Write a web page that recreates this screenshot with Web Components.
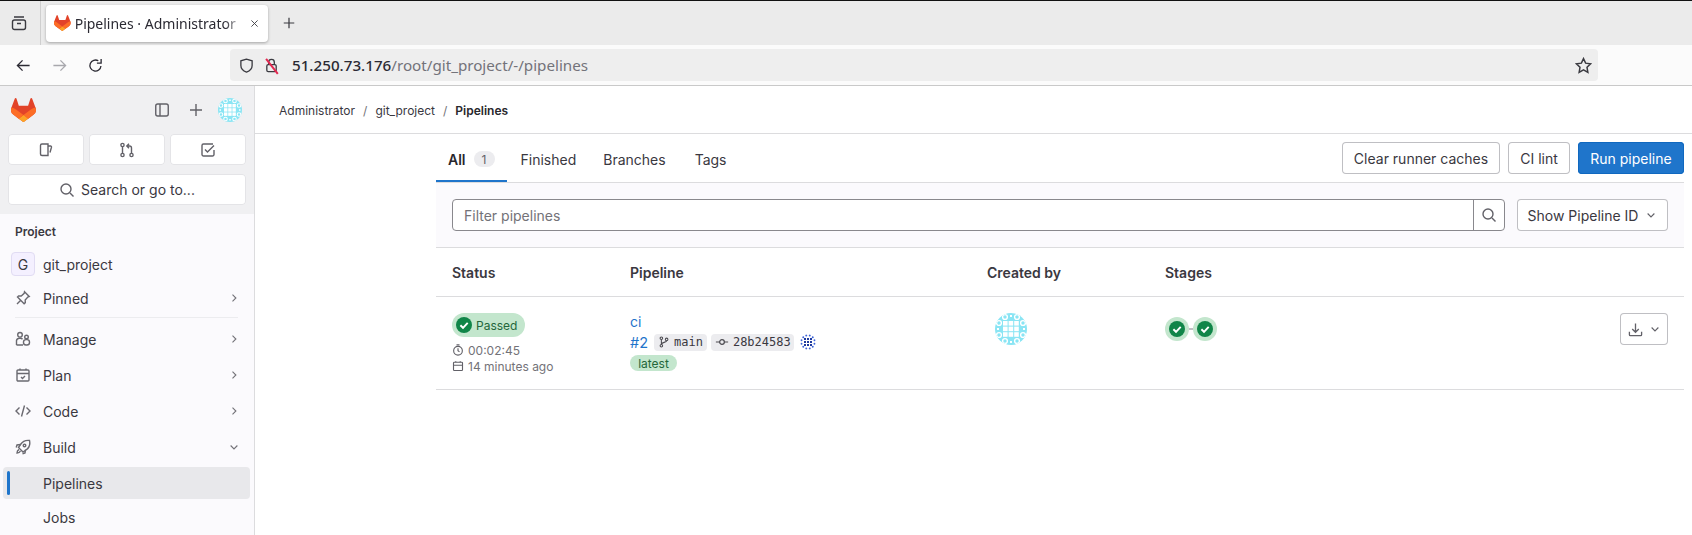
<!DOCTYPE html>
<html lang="en">
<head>
<meta charset="utf-8">
<title>Pipelines · Administrator</title>
<style>
    html, body { margin: 0; height: 100%; overflow: hidden; background: #fff; }
    body { font-family: Inter, "Noto Sans", sans-serif; font-size: 14px; color: #3a383f; }
    #shell { display: flex; flex-direction: column; height: 535px; }
    #page { display: flex; flex: 1; min-height: 0; }
</style>
</head>
<body>
<div id="shell">
    <browser-bar></browser-bar>
    <div id="page">
        <side-nav></side-nav>
        <pipelines-page></pipelines-page>
    </div>
</div>

<script>
// Small stroke icons, all on a 16 box
const icons = {
    chevronRight: '<path d="M6 3.5 10.5 8 6 12.5"/>',
    chevronDown: '<path d="M3.5 6 8 10.5 12.5 6"/>',
    panel: '<rect x="1.75" y="2" width="12.5" height="12" rx="2"/><path d="M6 2v12"/>',
    plus: '<path d="M8 2v12M2 8h12"/>',
    issue: '<path d="M10 13.5H4a1.5 1.5 0 0 1-1.5-1.5V3.5A1.5 1.5 0 0 1 4 2h6v11.5Zm0-9.5h2.5a1 1 0 0 1 1 1.2L12 10.5"/>',
    mr: '<circle cx="3.5" cy="3" r="1.6"/><circle cx="3.5" cy="13" r="1.6"/><circle cx="12.5" cy="13" r="1.6"/><path d="M3.5 4.6v6.8M12.5 11.4V6a2 2 0 0 0-2-2H8m2-2.2L7.8 4 10 6.2"/>',
    todo: '<path d="M14 8v4.5a1.5 1.5 0 0 1-1.5 1.5h-9A1.5 1.5 0 0 1 2 12.5v-9A1.5 1.5 0 0 1 3.5 2H13"/><path d="m5 7.5 2.5 2.5L14 3.5"/>',
    search: '<circle cx="7" cy="7" r="5"/><path d="m11 11 3.5 3.5"/>',
    pin: '<path d="m9.5 1.8 4.7 4.7-1.4.5-2.6 3 .1 2.6-1.2 1.1-6.6-6.6 1.1-1.2 2.6.1 3-2.6.3-1.6ZM5.5 10.5 2 14"/>',
    users: '<circle cx="5" cy="3.8" r="2.3"/><path d="M1.5 14V9.5A3 3 0 0 1 4.5 7.2h1a3 3 0 0 1 2 1M1.5 14h6.5"/><circle cx="11.5" cy="6" r="1.8"/><rect x="8.5" y="8.6" width="6" height="5.4" rx="2.5"/>',
    calendar: '<rect x="2" y="3" width="12" height="11" rx="1"/><path d="M2 6.5h12M5 1.5V3M11 1.5V3M6 10l1.5 1.5L10 9"/>',
    code: '<path d="M4.5 4.5 1 8l3.5 3.5M11.5 4.5 15 8l-3.5 3.5M9.5 2.5l-3 11"/>',
    rocket: '<path d="M14.5 1.5c-4-.5-7 1-9 4l-2 3 4.500 4.500 3-2c3-2 4.500-5 3.500-9.500Z"/><circle cx="9.500" cy="6.500" r="1.300"/><path d="M5.500 5.500 2 6l-.800 2.500M10.500 10.500 10 14l-2.500.800M4 10.500c-1 .500-2 2-2 3.500 1.500 0 3-1 3.500-2"/>',
    clock: '<circle cx="8" cy="9" r="5.800"/><path d="M8 5.800V9l2 1.500M6 1.200h4"/>',
    date: '<rect x="2" y="3" width="12" height="11" rx="1"/><path d="M2 7h12M5 1.500V3M11 1.500V3"/>',
    branch: '<circle cx="4.500" cy="3" r="1.700"/><circle cx="4.500" cy="13" r="1.700"/><circle cx="11.500" cy="4.500" r="1.700"/><path d="M4.500 4.700v6.600M11.500 6.200c0 2.800-7 1.800-7 5"/>',
    commit: '<circle cx="8" cy="8" r="2.700"/><path d="M1 8h4.300M10.700 8H15"/>',
    download: '<path d="M8 1.500v9M4.500 7.500 8 11l3.500-3.500M1.500 10.500v3a1 1 0 0 0 1 1h11a1 1 0 0 0 1-1v-3"/>',
    back: '<path d="M14.500 8h-13M7 2.500 1.500 8 7 13.500"/>',
    reload: '<path d="M13.800 8.500A5.900 5.900 0 1 1 11 3"/><path d="M14 1v4.500H9.500"/>',
    shield: '<path d="M8 1.200 2 3v5c0 3.500 2.500 5.800 6 7 3.500-1.200 6-3.500 6-7V3L8 1.200Z"/>',
    lock: '<rect x="3" y="7" width="10" height="7.500" rx="1.500"/><path d="M5 7V4.500a3 3 0 0 1 6 0V7"/>',
    star: '<path d="m8 1.500 2 4.300 4.700.600-3.400 3.300.8 4.700L8 12.100l-4.100 2.300.8-4.700L1.300 6.400 6 5.800 8 1.500Z"/>',
    tabs: '<rect x="1.500" y="5" width="13" height="9.500" rx="2"/><path d="M3 2h10M6 8.500h4"/>',
    close: '<path d="m3.500 3.500 9 9m0-9-9 9"/>'
};

const icon = (name, size = 16, color = 'currentColor', width = 1.4) =>
    `<svg width="${size}" height="${size}" viewBox="0 0 16 16" fill="none" stroke="${color}" stroke-width="${width}" style="display:block;flex:none">${icons[name]}</svg>`;

const tanuki = (size) => `<svg width="${size * 25 / 24}" height="${size}" viewBox="0 0 25 24" style="display:block;flex:none">
    <path d="m24.507 9.5-.034-.09L21.082.562a.896.896 0 0 0-1.694.091l-2.29 7.01H7.825L5.535.653a.898.898 0 0 0-1.694-.09L.451 9.411.416 9.5a6.297 6.297 0 0 0 2.09 7.278l.012.01.03.022 5.16 3.867 2.56 1.935 1.554 1.176a1.051 1.051 0 0 0 1.268 0l1.555-1.176 2.56-1.935 5.197-3.89.014-.01A6.297 6.297 0 0 0 24.507 9.5Z" fill="#E24329"/>
    <path d="m24.507 9.5-.034-.09a11.44 11.44 0 0 0-4.56 2.051l-7.447 5.632 4.742 3.584 5.197-3.89.014-.01A6.297 6.297 0 0 0 24.507 9.5Z" fill="#FC6D26"/>
    <path d="m7.707 20.677 2.56 1.935 1.555 1.176a1.051 1.051 0 0 0 1.268 0l1.555-1.176 2.56-1.935-4.743-3.584-4.755 3.584Z" fill="#FCA326"/>
    <path d="M5.01 11.461a11.43 11.43 0 0 0-4.56-2.05L.416 9.5a6.297 6.297 0 0 0 2.09 7.278l.012.01.03.022 5.16 3.867 4.745-3.584-7.444-5.632Z" fill="#FC6D26"/>
</svg>`;

const checkCircle = (size, bg = '#108548') => `<svg width="${size}" height="${size}" viewBox="0 0 16 16" style="display:block;flex:none">
    <circle cx="8" cy="8" r="8" fill="${bg}"/>
    <path d="M4.400 8.300 7 10.800l4.700-5" fill="none" stroke="#fff" stroke-width="1.900"/>
</svg>`;

// identicon: rings round the rim and a square lattice in the middle
const latticeCells = () => {
    let out = '';
    [[10, 4], [22, 4], [4, 10], [4, 22], [28, 10], [28, 22], [10, 28], [22, 28]].forEach(([x, y]) => {
        out += `<circle cx="${x}" cy="${y}" r="2.400" fill="none" stroke="#fff" stroke-width="1.400"/>`;
    });
    [[16, 3], [16, 29], [3, 16], [29, 16]].forEach(([x, y]) => {
        out += `<rect x="${x - 1}" y="${y - 1}" width="2" height="2" fill="#fff"/>`;
    });
    for (let y = 0; y < 3; y++) {
        for (let x = 0; x < 3; x++) {
            out += `<rect x="${8 + x * 5.600}" y="${8 + y * 5.600}" width="4.600" height="4.600" fill="#fff"/>`;
        }
    }
    return out;
};

// the tiny navy one: three by three squares in a ring of dots
const dotCells = () => {
    let out = '';
    for (let y = 0; y < 3; y++) {
        for (let x = 0; x < 3; x++) {
            out += `<rect x="${8 + x * 6}" y="${8 + y * 6}" width="4" height="4" fill="#1f3a9e"/>`;
        }
    }
    for (let i = 0; i < 12; i++) {
        const a = (i + 0.500) * Math.PI / 6;
        out += `<circle cx="${16 + 13.500 * Math.cos(a)}" cy="${16 + 13.500 * Math.sin(a)}" r="2" fill="#3d63d8"/>`;
    }
    return out;
};

class IdAvatar extends HTMLElement {
    connectedCallback() {
        const size = Number(this.getAttribute('size') || 24);
        const dots = this.hasAttribute('dots');
        this.attachShadow({ mode: 'open' }).innerHTML = `
            <style>
                :host { display: block; width: ${size}px; height: ${size}px; flex: none; }
                svg { display: block; }
            </style>
            <svg width="${size}" height="${size}" viewBox="0 0 32 32">
                <clipPath id="c"><circle cx="16" cy="16" r="16"/></clipPath>
                <g clip-path="url(#c)"><rect width="32" height="32" fill="${dots ? '#fff' : '#8ae5f4'}"/>${dots ? dotCells() : latticeCells()}</g>
            </svg>`;
    }
}
customElements.define('id-avatar', IdAvatar);

class BrowserBar extends HTMLElement {
    connectedCallback() {
        this.attachShadow({ mode: 'open' }).innerHTML = `
            <style>
                :host { display: block; border-top: 1px solid #111; font-family: "Noto Sans", sans-serif; color: #2b2a33; flex: none; }
                .strip { height: 44px; background: #ebebeb; display: flex; align-items: center; }
                .tabs-btn { width: 41px; display: flex; justify-content: center; border-right: 1px solid #cfcfcf; height: 100%; align-items: center; box-sizing: border-box; padding-right: 3px; }
                .tab { margin-left: 5px; width: 222px; height: 37px; background: #fff; border-radius: 4px; box-shadow: 0 1px 3px rgba(0,0,0,.3); display: flex; align-items: center; padding: 0 8px 0 8px; box-sizing: border-box; gap: 4px; font-size: 14px; }
                .title { flex: 1; overflow: hidden; white-space: nowrap; -webkit-mask-image: linear-gradient(to right, #000 88%, transparent); mask-image: linear-gradient(to right, #000 88%, transparent); }
                .new { margin-left: 14px; }
                .nav { height: 40px; background: #fbfbfb; display: flex; align-items: center; padding-left: 16px; border-bottom: 1px solid #c9c9c9; }
                .nav .btn { width: 15px; margin-right: 21px; }
                .url { margin-left: 106px; width: 1368px; height: 32px; background: #eeeeee; border-radius: 4px; display: flex; align-items: center; padding: 0 6px 0 9px; box-sizing: border-box; font-size: 15.200px; }
                .url .addr { margin-left: 13px; flex: 1; color: #73737a; }
                .url b { font-weight: 500; color: #2b2a33; }
                .lock { position: relative; margin-left: 10px; }
                .lock::after { content: ''; position: absolute; left: 7px; top: -1px; width: 1.500px; height: 19px; background: #e22850; transform: rotate(-38deg); }
            </style>
            <div class="strip">
                <div class="tabs-btn">${icon('tabs', 16, '#3a3a40')}</div>
                <div class="tab">
                    ${tanuki(16)}
                    <span class="title">Pipelines · Administrator</span>
                    ${icon('close', 11, '#3a3a40', 1.300)}
                </div>
                <div class="new">${icon('plus', 14, '#3a3a40', 1.400)}</div>
            </div>
            <div class="nav">
                <div class="btn">${icon('back', 15, '#2b2a33')}</div>
                <div class="btn">${icon('back', 15, '#a8a8ad').replace('style="', 'style="transform:scaleX(-1);')}</div>
                <div class="btn">${icon('reload', 15, '#2b2a33')}</div>
                <div class="url">
                    ${icon('shield', 15, '#3a3a40')}
                    <span class="lock">${icon('lock', 15, '#3a3a40')}</span>
                    <span class="addr"><b>51.250.73.176</b>/root/git_project/-/pipelines</span>
                    ${icon('star', 17, '#3a3a40')}
                </div>
            </div>`;
    }
}
customElements.define('browser-bar', BrowserBar);

class NavItem extends HTMLElement {
    connectedCallback() {
        const glyph = this.getAttribute('icon');
        const arrow = this.getAttribute('arrow');
        const active = this.hasAttribute('active');
        this.attachShadow({ mode: 'open' }).innerHTML = `
            <style>
                :host { display: block; }
                .row { display: flex; align-items: center; height: 32px; margin: 0 4px 0 3px; padding: 0 10px 0 12px; border-radius: 4px; position: relative; color: #3a383f; font-size: 14px; }
                .row.active { background: #e8e8eb; }
                .row.active::before { content: ''; position: absolute; left: 4px; top: 4px; bottom: 4px; width: 3px; border-radius: 2px; background: #1f75cb; }
                .glyph { width: 16px; margin-right: 12px; color: #6a6970; }
                .label { flex: 1; }
                .arrow { color: #737278; }
            </style>
            <div class="row ${active ? 'active' : ''}">
                <span class="glyph">${glyph ? icon(glyph, 16) : ''}</span>
                <span class="label"><slot></slot></span>
                ${arrow ? `<span class="arrow">${icon(arrow === 'down' ? 'chevronDown' : 'chevronRight', 12, 'currentColor', 1.500)}</span>` : ''}
            </div>`;
    }
}
customElements.define('nav-item', NavItem);

class SideNav extends HTMLElement {
    connectedCallback() {
        this.attachShadow({ mode: 'open' }).innerHTML = `
            <style>
                :host { display: block; width: 255px; flex: none; box-sizing: border-box; border-right: 1px solid #dcdcde; background: #fbfafd; overflow: hidden; }
                .top { background: #f0f0f2; height: 128px; padding: 12px 8px 0; box-sizing: border-box; }
                .brand { display: flex; align-items: center; height: 24px; padding-left: 3px; color: #626168; }
                .brand .logo { flex: 1; }
                .brand .panel { margin-right: 18px; }
                .brand .plus { margin-right: 14px; }
                .brand id-avatar { margin-right: 4px; }
                .quick { display: grid; grid-template-columns: 76px 76px 76px; justify-content: space-between; margin-top: 12px; }
                .card { height: 31px; background: #fff; border-radius: 4px; box-shadow: 0 0 0 1px #e4e4e7 inset; display: flex; align-items: center; justify-content: center; color: #626168; }
                .search { margin-top: 9px; height: 31px; gap: 6px; font-size: 14px; color: #3a383f; }
                .search svg { color: #626168; }
                h2 { margin: 0; font-size: 12px; font-weight: 600; color: #3a383f; padding: 0 15px; height: 16px; line-height: 16px; margin-top: 10px; }
                .project { display: flex; align-items: center; height: 32px; padding-left: 11px; margin-top: 8px; font-size: 14px; }
                .tile { width: 24px; height: 24px; box-sizing: border-box; border: 1px solid #e1dcf3; border-radius: 4px; background: #f4f0ff; display: flex; align-items: center; justify-content: center; margin-right: 8px; font-size: 14px; }
                hr { border: 0; border-top: 1px solid #ececef; margin: 3px 16px 5px 15px; }
            </style>
            <div class="top">
                <div class="brand">
                    <span class="logo">${tanuki(24)}</span>
                    <span class="panel">${icon('panel', 16)}</span>
                    <span class="plus">${icon('plus', 16)}</span>
                    <id-avatar size="24"></id-avatar>
                </div>
                <div class="quick">
                    <div class="card">${icon('issue', 16)}</div>
                    <div class="card">${icon('mr', 16)}</div>
                    <div class="card">${icon('todo', 16)}</div>
                </div>
                <div class="card search">${icon('search', 16)}<span>Search or go to...</span></div>
            </div>
            <h2>Project</h2>
            <div class="project"><span class="tile">G</span>git_project</div>
            <nav-item icon="pin" arrow="right" style="margin-top:2px">Pinned</nav-item>
            <hr>
            <nav-item icon="users" arrow="right" style="margin-top:2px">Manage</nav-item>
            <nav-item icon="calendar" arrow="right" style="margin-top:4px">Plan</nav-item>
            <nav-item icon="code" arrow="right" style="margin-top:4px">Code</nav-item>
            <nav-item icon="rocket" arrow="down" style="margin-top:4px">Build</nav-item>
            <nav-item active style="margin-top:4px">Pipelines</nav-item>
            <nav-item style="margin-top:2px">Jobs</nav-item>`;
    }
}
customElements.define('side-nav', SideNav);

class GlButton extends HTMLElement {
    connectedCallback() {
        const primary = this.hasAttribute('primary');
        this.attachShadow({ mode: 'open' }).innerHTML = `
            <style>
                :host { display: inline-flex; flex: none; height: 32px; box-sizing: border-box; align-items: center; justify-content: center; padding: 0; border-radius: 4px; font-size: 14px; gap: 8px;
                    background: ${primary ? '#1f75cb' : '#fff'};
                    color: ${primary ? '#fff' : '#3a383f'};
                    box-shadow: inset 0 0 0 1px ${primary ? '#1068bf' : '#bfbfc3'}; }
            </style>
            <slot></slot>`;
    }
}
customElements.define('gl-button', GlButton);

class PipelineTabs extends HTMLElement {
    connectedCallback() {
        this.attachShadow({ mode: 'open' }).innerHTML = `
            <style>
                :host { display: flex; height: 49px; box-sizing: border-box; border-bottom: 1px solid #dcdcde; justify-content: space-between; padding-top: 8px; }
                .tabs { display: flex; height: 40px; }
                .tab { display: flex; align-items: center; padding: 0 12px 6px; height: 40px; box-sizing: border-box; color: #3a383f; gap: 8px; margin-right: 3px; }
                .tab.on { font-weight: 600; box-shadow: inset 0 -2px 0 #1f75cb; color: #28272d; margin-right: 0; }
                .tab.wide { margin-right: 5px; }
                .count { display: inline-flex; align-items: center; justify-content: center; width: 21px; height: 16px; border-radius: 8px; background: #ececef; font-size: 12px; font-weight: 400; color: #626168; }
                .actions { display: flex; gap: 8px; }
            </style>
            <div class="tabs">
                <div class="tab on" style="margin-right:2px">All <span class="count">1</span></div>
                <div class="tab">Finished</div>
                <div class="tab wide">Branches</div>
                <div class="tab">Tags</div>
            </div>
            <div class="actions">
                <gl-button style="width:158px">Clear runner caches</gl-button>
                <gl-button style="width:62px">CI lint</gl-button>
                <gl-button primary style="width:106px">Run pipeline</gl-button>
            </div>`;
    }
}
customElements.define('pipeline-tabs', PipelineTabs);

class FilterBar extends HTMLElement {
    connectedCallback() {
        this.attachShadow({ mode: 'open' }).innerHTML = `
            <style>
                :host { display: flex; height: 65px; box-sizing: border-box; padding: 16px; background: #fbfafd; border-bottom: 1px solid #dcdcde; gap: 12px; }
                .field { flex: 1; display: flex; height: 32px; box-sizing: border-box; border: 1px solid #89888d; border-radius: 4px; background: #fff; }
                .text { flex: 1; padding-left: 11px; line-height: 32px; color: #737278; }
                .go { width: 30px; border-left: 1px solid #89888d; display: flex; align-items: center; justify-content: center; color: #626168; }
            </style>
            <div class="field">
                <span class="text">Filter pipelines</span>
                <span class="go">${icon('search', 16)}</span>
            </div>
            <gl-button style="width:151px;gap:7px">Show Pipeline ID ${icon('chevronDown', 12, '#626168', 1.500)}</gl-button>`;
    }
}
customElements.define('filter-bar', FilterBar);

class PipelineRow extends HTMLElement {
    connectedCallback() {
        this.attachShadow({ mode: 'open' }).innerHTML = `
            <style>
                :host { display: block; font-size: 14px; }
                .grid { display: grid; grid-template-columns: 178px 357px 178px 1fr auto; padding: 0 16px; }
                .head { height: 49px; align-items: center; font-weight: 600; border-bottom: 1px solid #dcdcde; box-sizing: border-box; color: #3a383f; }
                .row { height: 93px; box-sizing: border-box; border-bottom: 1px solid #dcdcde; }
                .status { padding-top: 16px; font-size: 12px; color: #737278; }
                .passed { display: inline-flex; align-items: center; gap: 4px; height: 24px; padding: 0 8px 0 4px; border-radius: 12px; background: #c3e6cd; color: #24663b; font-size: 12px; width: 73px; box-sizing: border-box; }
                .meta { display: flex; align-items: center; gap: 4px; height: 16px; }
                .meta.first { margin-top: 5px; }
                .pipe { padding-top: 16px; color: #1f75cb; }
                .ci { line-height: 18px; height: 18px; }
                .line { display: flex; align-items: center; height: 18px; margin-top: 2px; }
                .num { width: 24px; font-size: 14.500px; }
                .chip { display: inline-flex; align-items: center; height: 17px; border-radius: 4px; background: #ececef; color: #3a383f; font: 12px "DejaVu Sans Mono", monospace; padding: 0 4px; gap: 4px; }
                .chip svg { color: #4c4b51; }
                .hash { margin-left: 4px; width: 83px; box-sizing: border-box; }
                .latest { display: inline-flex; align-items: center; justify-content: center; width: 47px; height: 16px; border-radius: 8px; background: #c3e6cd; color: #24663b; font-size: 12px; margin-top: 4px; }
                .by { padding-top: 16px; padding-left: 8px; }
                .stages { padding-top: 20px; display: flex; align-items: flex-start; }
                .stage { width: 24px; height: 24px; border-radius: 50%; background: #c3e6cd; display: flex; align-items: center; justify-content: center; }
                .link { width: 4px; height: 2px; background: #bfbfc3; margin-top: 11px; }
                .acts { padding-top: 16px; }
                .acts gl-button { width: 48px; gap: 6px; }
            </style>
            <div class="grid head">
                <div>Status</div><div>Pipeline</div><div>Created by</div><div>Stages</div>
            </div>
            <div class="grid row">
                <div class="status">
                    <span class="passed">${checkCircle(16)}Passed</span>
                    <div class="meta first">${icon('clock', 12, '#626168', 1.500)}<span>00:02:45</span></div>
                    <div class="meta">${icon('date', 12, '#626168', 1.500)}<span>14 minutes ago</span></div>
                </div>
                <div class="pipe">
                    <div class="ci">ci</div>
                    <div class="line">
                        <span class="num">#2</span>
                        <span class="chip">${icon('branch', 12)}main</span>
                        <span class="chip hash">${icon('commit', 14)}28b24583</span>
                        <id-avatar size="16" dots style="margin-left:6px"></id-avatar>
                    </div>
                    <span class="latest">latest</span>
                </div>
                <div class="by"><id-avatar size="32"></id-avatar></div>
                <div class="stages">
                    <div class="stage">${checkCircle(16)}</div>
                    <div class="link"></div>
                    <div class="stage">${checkCircle(16)}</div>
                </div>
                <div class="acts"><gl-button>${icon('download', 15, '#626168')}${icon('chevronDown', 12, '#626168', 1.500)}</gl-button></div>
            </div>`;
    }
}
customElements.define('pipeline-row', PipelineRow);

class PipelinesPage extends HTMLElement {
    connectedCallback() {
        this.attachShadow({ mode: 'open' }).innerHTML = `
            <style>
                :host { display: block; flex: 1; min-width: 0; }
                .crumbs { height: 48px; box-sizing: border-box; border-bottom: 1px solid #dcdcde; display: flex; align-items: center; gap: 8px; padding: 1px 0 0 24px; font-size: 12px; color: #3a383f; }
                .crumbs i { font-style: normal; color: #737278; }
                .crumbs b { font-weight: 600; color: #28272d; }
                .body { padding: 0 8px 0 181px; }
            </style>
            <div class="crumbs">
                <span>Administrator</span><i>/</i><span>git_project</span><i>/</i><b>Pipelines</b>
            </div>
            <div class="body">
                <pipeline-tabs></pipeline-tabs>
                <filter-bar></filter-bar>
                <pipeline-row></pipeline-row>
            </div>`;
    }
}
customElements.define('pipelines-page', PipelinesPage);
</script>
</body>
</html>
